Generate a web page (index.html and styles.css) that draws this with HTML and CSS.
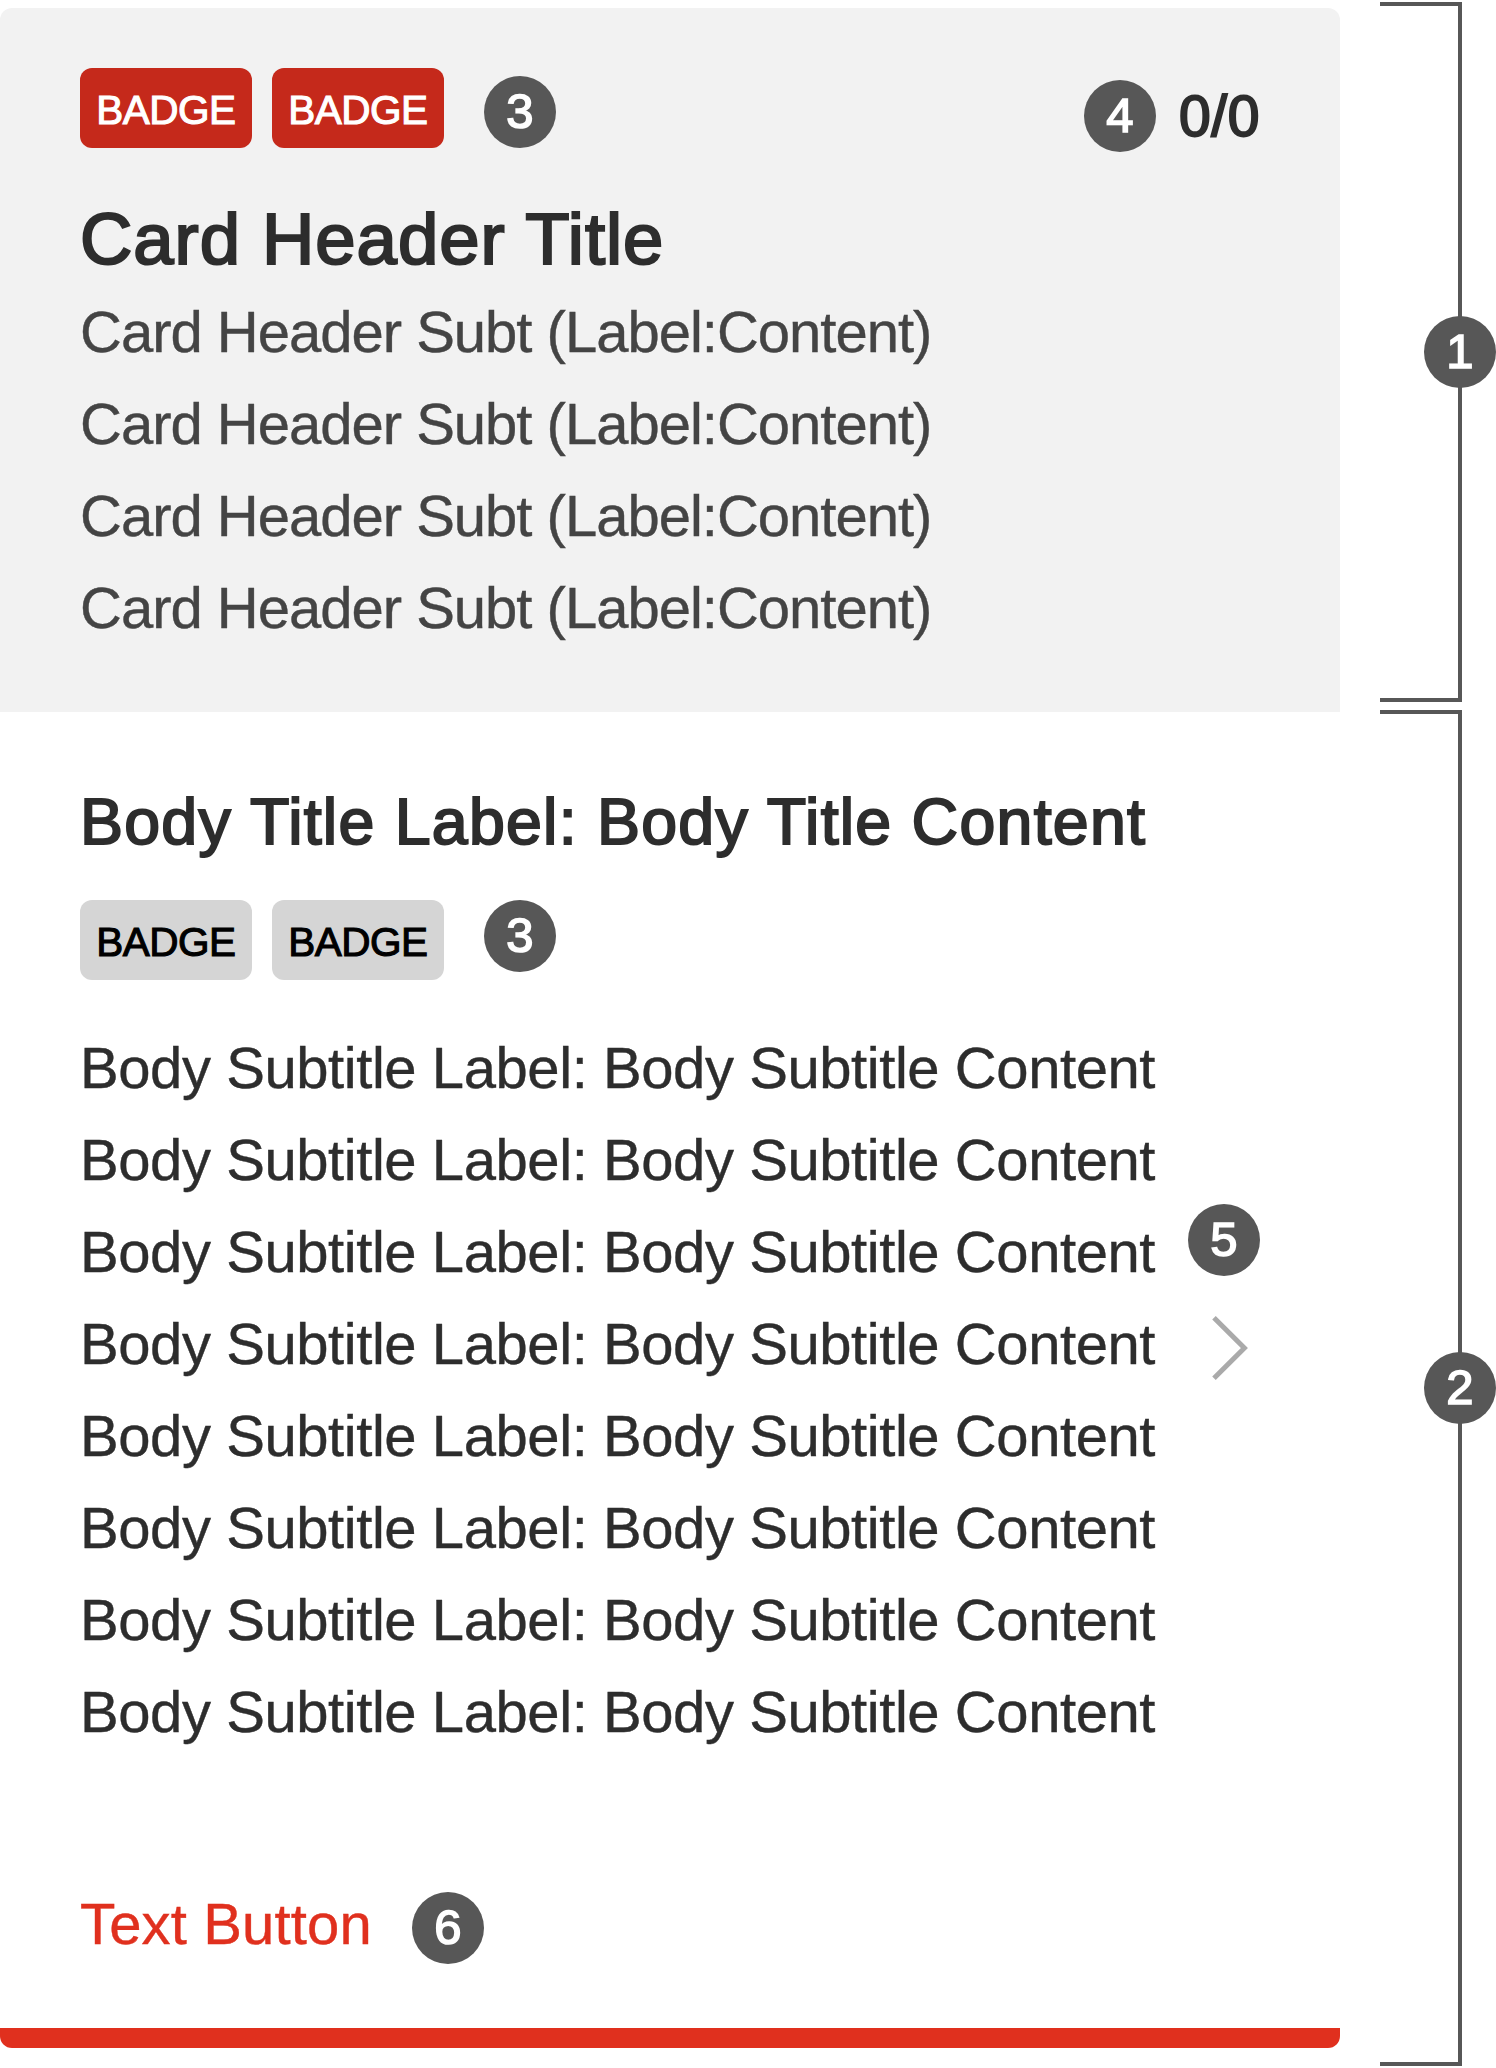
FILE: index.html
```
<!DOCTYPE html>
<html lang="en">
<head>
<meta charset="utf-8">
<title>Card anatomy</title>
<link rel="stylesheet" href="styles.css">
</head>
<body>
<main class="anatomy">
  <article class="card">
    <header class="card-header">
      <div class="header-top">
        <div class="badges">
          <span class="badge badge-red">BADGE</span>
          <span class="badge badge-red">BADGE</span>
          <span class="marker marker-header">3</span>
        </div>
        <div class="counter">
          <span class="marker">4</span>
          <span class="count">0/0</span>
        </div>
      </div>
      <h1 class="header-title">Card Header Title</h1>
      <ul class="lines lines-header">
        <li>Card Header Subt (Label:Content)</li>
        <li>Card Header Subt (Label:Content)</li>
        <li>Card Header Subt (Label:Content)</li>
        <li>Card Header Subt (Label:Content)</li>
      </ul>
    </header>
    <section class="card-body">
      <h2 class="body-title">Body Title Label: Body Title Content</h2>
      <div class="badges">
        <span class="badge badge-gray">BADGE</span>
        <span class="badge badge-gray">BADGE</span>
        <span class="marker marker-body">3</span>
      </div>
      <div class="content">
        <ul class="lines lines-body">
          <li>Body Subtitle Label: Body Subtitle Content</li>
          <li>Body Subtitle Label: Body Subtitle Content</li>
          <li>Body Subtitle Label: Body Subtitle Content</li>
          <li>Body Subtitle Label: Body Subtitle Content</li>
          <li>Body Subtitle Label: Body Subtitle Content</li>
          <li>Body Subtitle Label: Body Subtitle Content</li>
          <li>Body Subtitle Label: Body Subtitle Content</li>
          <li>Body Subtitle Label: Body Subtitle Content</li>
        </ul>
        <div class="navigate">
          <span class="marker">5</span>
          <svg class="chevron" width="40" height="64" viewBox="0 0 40 64" fill="none" stroke="#aaa" stroke-width="5"><path d="M2 1.8 32.4 32 2 62.2"/></svg>
        </div>
      </div>
      <div class="actions">
        <a class="text-button">Text Button</a>
        <span class="marker marker-action">6</span>
      </div>
    </section>
  </article>
  <aside class="brackets">
    <div class="bracket bracket-header"><span class="marker">1</span></div>
    <div class="bracket bracket-body"><span class="marker">2</span></div>
  </aside>
</main>
</body>
</html>
```
FILE: styles.css
```
* {
  box-sizing: border-box;
}

body {
  margin: 0;
  background: #fff;
  color: #2d2d2d;
  font-family: "Liberation Sans", Arial, sans-serif;
}

h1, h2, ul {
  margin: 0;
  padding: 0;
  font-weight: 400;
  list-style: none;
}

.anatomy {
  display: flex;
  width: 1496px;
  height: 2068px;
}

.card {
  width: 1340px;
  height: 2040px;
  margin-top: 8px;
  display: flex;
  flex-direction: column;
  border-radius: 12px;
  overflow: hidden;
}

.card-header {
  height: 704px;
  padding: 60px 80px 0;
  background: #f2f2f2;
}

.header-top {
  display: flex;
  justify-content: space-between;
  height: 84px;
}

.badges {
  display: flex;
  align-items: flex-start;
  gap: 20px;
}

.badge {
  width: 172px;
  height: 80px;
  border-radius: 12px;
  font-size: 40.5px;
  line-height: 84px;
  letter-spacing: -0.5px;
  text-align: center;
  white-space: nowrap;
  -webkit-text-stroke: 1.1px currentColor;
}

.badge-red {
  background: #c5291b;
  color: #fff;
}

.badge-gray {
  background: #d5d5d5;
  color: #000;
}

.marker {
  flex: none;
  width: 72px;
  height: 72px;
  border-radius: 50%;
  background: #575757;
  color: #fff;
  font-size: 49px;
  line-height: 71px;
  text-align: center;
  -webkit-text-stroke: 1.6px currentColor;
}

.marker-header {
  margin: 8px 0 0 20px;
}

.marker-body {
  margin-left: 20px;
}

.counter {
  display: flex;
  align-items: flex-start;
  gap: 23px;
  margin-top: 12px;
}

.count {
  font-size: 57px;
  line-height: 73px;
  letter-spacing: 0.6px;
  -webkit-text-stroke: 2px currentColor;
}

.header-title {
  margin: 42px 0 2px;
  font-size: 72.5px;
  line-height: 90px;
  letter-spacing: 0.95px;
  -webkit-text-stroke: 2.2px currentColor;
}

.lines {
  font-size: 58px;
  line-height: 92px;
  white-space: nowrap;
  -webkit-text-stroke: 0.4px currentColor;
}

.lines-header {
  color: #444;
  letter-spacing: -1px;
}

.lines-body {
  letter-spacing: -0.43px;
}

.card-body {
  flex: 1;
  padding: 70px 80px 0;
  border-bottom: 20px solid #e0301e;
}

.body-title {
  margin-bottom: 38px;
  font-size: 64.5px;
  line-height: 80px;
  letter-spacing: 1.23px;
  white-space: nowrap;
  -webkit-text-stroke: 2px currentColor;
}

.content {
  display: flex;
  justify-content: space-between;
  height: 736px;
  margin-top: 42px;
}

.navigate {
  display: flex;
  flex-direction: column;
  align-items: center;
  gap: 40px;
  padding-top: 182px;
}

.chevron {
  margin-left: 16px;
}

.actions {
  display: flex;
  align-items: flex-start;
  margin-top: 130px;
}

.text-button {
  width: 292px;
  color: #e0301e;
  font-size: 58px;
  line-height: 72px;
  letter-spacing: 0.15px;
  white-space: nowrap;
  -webkit-text-stroke: 0.4px currentColor;
}

.marker-action {
  margin: 4px 0 0 40px;
}

.brackets {
  display: flex;
  flex-direction: column;
  gap: 8px;
  margin-left: 40px;
  padding-top: 2px;
}

.bracket {
  display: flex;
  align-items: center;
  justify-content: flex-end;
  width: 82px;
  border: 4px solid #575757;
  border-left: 0;
}

.bracket .marker {
  margin-right: -38px;
}

.bracket-header {
  height: 700px;
}

.bracket-body {
  height: 1356px;
}
```
